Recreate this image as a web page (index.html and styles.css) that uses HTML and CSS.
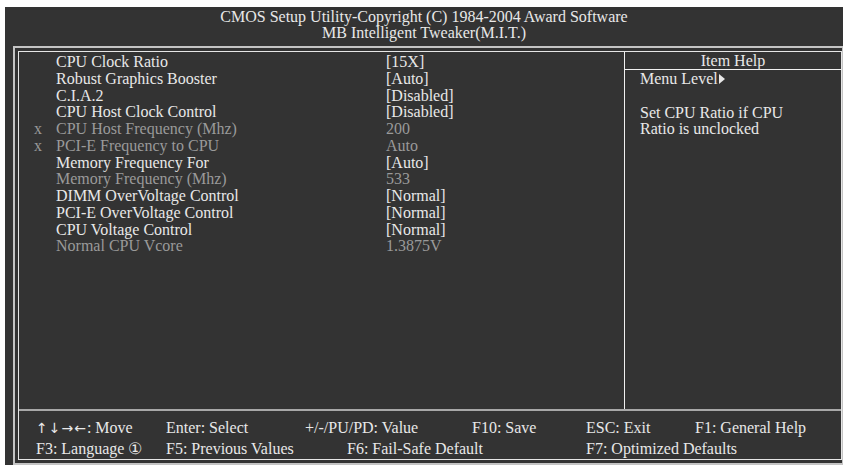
FILE: index.html
```html
<!DOCTYPE html>
<html lang="en">
<head>
<meta charset="UTF-8">
<title>MB Intelligent Tweaker(M.I.T.)</title>
<link rel="stylesheet" href="styles.css">
</head>
<body>
<div class="screen">
    <div class="title">
        <div>CMOS Setup Utility-Copyright (C) 1984-2004 Award Software</div>
        <div>MB Intelligent Tweaker(M.I.T.)</div>
    </div>
    <div class="frame">
        <div class="inner">
            <div class="main">
                <div class="items">
                    <div class="row"><span class="mark"></span><span>CPU Clock Ratio</span><span>[15X]</span></div>
                    <div class="row"><span class="mark"></span><span>Robust Graphics Booster</span><span>[Auto]</span></div>
                    <div class="row"><span class="mark"></span><span>C.I.A.2</span><span>[Disabled]</span></div>
                    <div class="row"><span class="mark"></span><span>CPU Host Clock Control</span><span>[Disabled]</span></div>
                    <div class="row off"><span class="mark">x</span><span>CPU Host Frequency (Mhz)</span><span>200</span></div>
                    <div class="row off"><span class="mark">x</span><span>PCI-E Frequency to CPU</span><span>Auto</span></div>
                    <div class="row"><span class="mark"></span><span>Memory Frequency For</span><span>[Auto]</span></div>
                    <div class="row off"><span class="mark"></span><span>Memory Frequency (Mhz)</span><span>533</span></div>
                    <div class="row"><span class="mark"></span><span>DIMM OverVoltage Control</span><span>[Normal]</span></div>
                    <div class="row"><span class="mark"></span><span>PCI-E OverVoltage Control</span><span>[Normal]</span></div>
                    <div class="row"><span class="mark"></span><span>CPU Voltage Control</span><span>[Normal]</span></div>
                    <div class="row off"><span class="mark"></span><span>Normal CPU Vcore</span><span>1.3875V</span></div>
                </div>
                <div class="help">
                    <div class="help-title">Item Help</div>
                    <div class="help-body">
                        <div>Menu Level<span class="arrow"></span></div>
                        <div>&nbsp;</div>
                        <div>Set CPU Ratio if CPU</div>
                        <div>Ratio is unclocked</div>
                    </div>
                </div>
            </div>
            <div class="footer">
                <div class="keys keys-top">
                    <span><span class="arrows">↑↓→←</span>: Move</span>
                    <span>Enter: Select</span>
                    <span>+/-/PU/PD: Value</span>
                    <span>F10: Save</span>
                    <span>ESC: Exit</span>
                    <span>F1: General Help</span>
                </div>
                <div class="keys keys-bottom">
                    <span>F3: Language ①</span>
                    <span>F5: Previous Values</span>
                    <span>F6: Fail-Safe Default</span>
                    <span>F7: Optimized Defaults</span>
                </div>
            </div>
        </div>
    </div>
</div>
</body>
</html>
```

FILE: styles.css
```css
body {
    margin: 0;
    background-color: #fff;
    font-family: "Liberation Serif", "Times New Roman", serif;
    font-size: 16px;
    color: #e8e8e8;
}

.screen {
    margin: 7px 0 0 5px;
    width: 838px;
    height: 458px;
    background-color: #333;
    overflow: hidden;
}

.title {
    height: 39px;
    padding-top: 2px;
    box-sizing: border-box;
    text-align: center;
    line-height: 16px;
}

.frame {
    margin-left: 8px;
    border: 2px solid #c4c4c4;
    border-right-width: 1px;
    padding: 3px 0 2px 3px;
    height: 419px;
    box-sizing: border-box;
}

.inner {
    border: 1px solid #e6e6e6;
    height: 409px;
    box-sizing: border-box;
    display: flex;
    flex-direction: column;
}

.main {
    display: flex;
    height: 359px;
    border-bottom: 2px solid #a8a8a8;
}

.items {
    width: 605px;
    padding: 2px 0 0 15px;
    box-sizing: border-box;
    line-height: 16.75px;
}

.row {
    display: grid;
    grid-template-columns: 22px 330px 1fr;
}

.row.off {
    color: #9a9a9a;
}

.help {
    flex: 1;
    border-left: 1px solid #f0f0f0;
}

.help-title {
    text-align: center;
    height: 17px;
    line-height: 18px;
    border-bottom: 1px solid #f0f0f0;
}

.help-body {
    padding: 1px 0 0 15px;
    line-height: 16.75px;
}

.arrow {
    display: inline-block;
    width: 0;
    height: 0;
    border-top: 5px solid transparent;
    border-bottom: 5px solid transparent;
    border-left: 6px solid #e8e8e8;
    margin-left: 1px;
}

.footer {
    flex: 1;
    padding: 6px 0 0 17px;
}

.keys {
    display: grid;
    height: 21px;
    line-height: 21px;
    white-space: nowrap;
}

.arrows {
    font-family: "DejaVu Sans", sans-serif;
    font-size: 14px;
    letter-spacing: 1px;
}

.keys-top {
    grid-template-columns: 130px 139px 167px 114px 109px 1fr;
}

.keys-bottom {
    grid-template-columns: 130px 181px 239px 1fr;
}
```
